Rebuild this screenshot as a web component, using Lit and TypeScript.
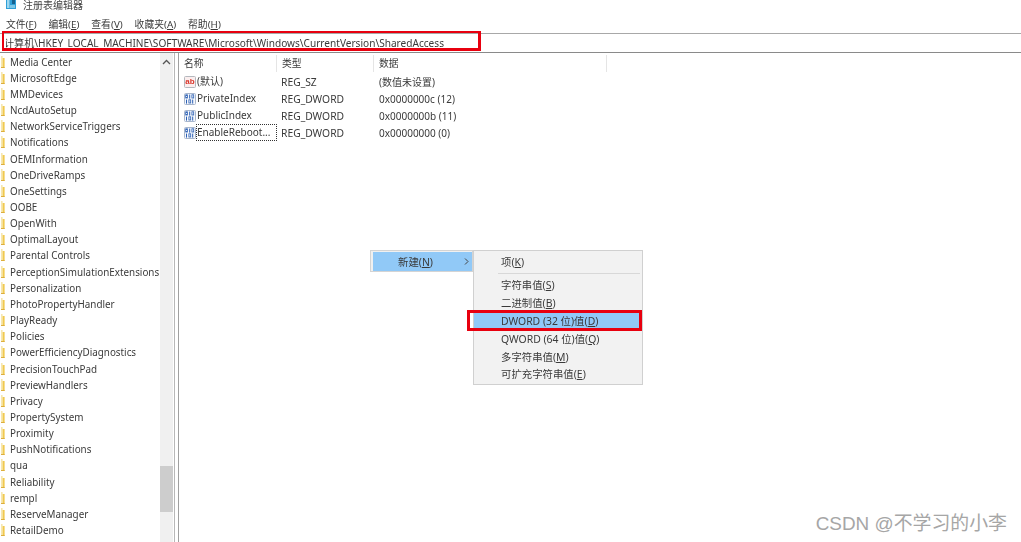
import { LitElement, html, css, svg } from "lit";
import { customElement } from "lit/decorators.js";

const TREE = ["Media Center","MicrosoftEdge","MMDevices","NcdAutoSetup","NetworkServiceTriggers","Notifications","OEMInformation","OneDriveRamps","OneSettings","OOBE","OpenWith","OptimalLayout","Parental Controls","PerceptionSimulationExtensions","Personalization","PhotoPropertyHandler","PlayReady","Policies","PowerEfficiencyDiagnostics","PrecisionTouchPad","PreviewHandlers","Privacy","PropertySystem","Proximity","PushNotifications","qua","Reliability","rempl","ReserveManager","RetailDemo"];

const VALUES = [
  { kind: "ab", name: "(默认)", type: "REG_SZ", data: "(数值未设置)" },
  { kind: "bin", name: "PrivateIndex", type: "REG_DWORD", data: "0x0000000c (12)" },
  { kind: "bin", name: "PublicIndex", type: "REG_DWORD", data: "0x0000000b (11)" },
  { kind: "bin", name: "EnableReboot...", type: "REG_DWORD", data: "0x00000000 (0)", focus: true },
];

const folder = html`<svg class="folder" viewBox="0 0 4 12" width="4" height="12">
  <rect x="0" y="0" width="1.6" height="12" fill="#f6e7ae"/>
  <rect x="1.6" y="2" width="2" height="10" fill="#f0c94f"/>
  <rect x="0" y="11" width="3.6" height="1" fill="#dcae3e"/>
</svg>`;

const abIcon = html`<svg class="ico" viewBox="0 0 12 12" width="12" height="12">
  <rect x="0.5" y="0.5" width="11" height="11" rx="1" fill="#fbeeee" stroke="#b4b8be"/>
  <text x="6" y="8.4" text-anchor="middle" font-size="8" font-weight="700" fill="#d8352a" font-family="Liberation Sans">ab</text>
</svg>`;

const digit = (x: number, y: number, one: boolean) =>
  one
    ? svg`<path d="M${x + 1} ${y} V${y + 4}" stroke="#2a5fb4" stroke-width="1" fill="none"/>`
    : svg`<rect x=${x + 0.2} y=${y + 0.2} width="1.8" height="3.2" fill="none" stroke="#2a5fb4" stroke-width="0.8"/>`;

const binIcon = html`<svg class="ico" viewBox="0 0 12 12" width="12" height="12">
  <rect x="0.5" y="0.5" width="11" height="11" rx="1" fill="#f6f8fc" stroke="#a8b6cc"/>
  ${digit(1.5, 1.6, false)}${digit(4.7, 1.6, true)}${digit(7.7, 1.6, false)}
  ${digit(1.5, 6.6, true)}${digit(4.7, 6.6, false)}${digit(7.7, 6.6, true)}
</svg>`;

@customElement("app-root")
export class AppRoot extends LitElement {
  static styles = css`
    :host {
      display: block; position: relative; width: 1021px; height: 542px; overflow: hidden; background: #fff;
      font-family: "Noto Sans", "Noto Sans CJK SC", sans-serif; font-size: 10px; color: #3a3a3a;
    }
    .window { display: flex; flex-direction: column; height: 542px; filter: blur(0.3px); }
    .title { height: 17px; display: flex; align-items: flex-start; gap: 7px; padding-left: 6px; flex: none; }
    .title span { font-size: 10px; line-height: 10px; color: #444; }
    .menu { height: 14px; margin-bottom: 2px; display: flex; gap: 11.9px; padding-left: 6px; align-items: center; flex: none; font-size: 9.8px; }
    .addr { height: 18px; flex: none; border-top: 1px solid #a8a8a8; border-bottom: 1px solid #8a8a8a; overflow: hidden; display: flex; align-items: flex-start; padding-left: 4px; }
    .addr span { white-space: nowrap; font-size: 10.1px; line-height: 18px; clip-path: inset(0 0 0 2px); }
    .main { flex: 1; display: flex; min-height: 0; }
    .tree { width: 160px; flex: none; padding-top: 0.5px; display: grid; grid-auto-rows: 16.17px; overflow: hidden; font-size: 9.85px; }
    .node { display: flex; align-items: center; gap: 5px; padding-left: 1px; white-space: nowrap; }
    .folder { flex: none; }
    .scroll { width: 13px; flex: none; background: #f0f0f0; display: flex; flex-direction: column; align-items: stretch; }
    .up { height: 18px; display: flex; align-items: center; justify-content: center; }
    .gap { height: 395px; }
    .thumb { height: 46px; background: #cdcdcd; }
    .split { width: 5px; flex: none; border-left: 1px solid #b8b8b8; border-right: 1px solid #a0a0a0; margin-left: 1px; box-sizing: border-box; }
    .list { flex: 1; min-width: 0; }
    .head { display: grid; grid-template-columns: 98px 97px 233px; height: 19px; padding-top: 2px; box-sizing: border-box; }
    .head div { padding-left: 5px; border-right: 1px solid #e5e5e5; line-height: 17px; font-size: 9.8px; }
    .rows { display: grid; grid-auto-rows: 17px; padding-top: 1px; }
    .row { display: grid; grid-template-columns: 98px 97px 233px; align-items: center; }
    .name { display: flex; align-items: center; padding-left: 5px; }
    .ico { flex: none; }
    .label { white-space: nowrap; padding: 0; line-height: 15px; border: 1px solid transparent; flex: 1; }
    .label.focus { border: 1px dotted #333; }
    .cell { padding-left: 4px; white-space: nowrap; font-size: 10.3px; }
    .cell2 { padding-left: 5px; white-space: nowrap; }

    .submenu { position: absolute; left: 370px; top: 250px; width: 103px; height: 22px; box-sizing: border-box; background: #f0f0f0; border: 1px solid #d4d4d4; padding: 1px 0 0 2px; font-size: 10.4px; filter: blur(0.3px); }
    .submenu .hot { height: 19px; background: #91c9f7; display: flex; align-items: center; justify-content: space-between; padding: 0 3px 0 25px; }
    .popup { position: absolute; left: 473px; top: 250px; width: 170px; height: 135px; box-sizing: border-box; background: #f2f2f2; border: 1px solid #d0d0d0; padding-top: 1px; font-size: 10.4px; filter: blur(0.3px); display: flex; flex-direction: column; }
    .item { height: 17.8px; flex: none; display: flex; align-items: center; padding-left: 27px; margin-right: 2px; white-space: nowrap; }
    .item.hot { background: #91c9f7; }
    .item.first { height: 18px; }
    .sep { height: 1px; background: #d8d8d8; margin: 2.5px 2px 2.5px 24px; flex: none; }
    .mark { position: absolute; border: 3px solid #e8000f; box-sizing: border-box; }
    .mark.a { left: 2px; top: 31px; width: 479px; height: 20px; border-width: 2px 3px 3px 2px; }
    .mark.b { left: 467px; top: 310px; width: 175px; height: 21px; }
    .wm { position: absolute; right: 14px; top: 512px; font-size: 18.9px; line-height: 24px; color: #a6a6a6; white-space: nowrap; font-family: "Liberation Sans", "Noto Sans CJK SC", sans-serif; }
  `;

  render() {
    return html`
      <div class="window">
        <div class="title">
          <svg viewBox="0 0 10 9" width="10" height="9" style="flex:none">
            <rect width="10" height="9" fill="#2f9fd8"/>
            <rect x="1" y="0" width="2.5" height="8" fill="#9fd8ef"/>
            <rect x="6" y="0" width="3" height="4" fill="#17628f"/>
            <rect x="4" y="5" width="5" height="3" fill="#7ec7e6"/>
          </svg>
          <span>注册表编辑器</span>
        </div>
        <div class="menu">
          <span>文件(<u>F</u>)</span><span>编辑(<u>E</u>)</span><span>查看(<u>V</u>)</span><span>收藏夹(<u>A</u>)</span><span>帮助(<u>H</u>)</span>
        </div>
        <div class="addr"><span>计算机\\HKEY_LOCAL_MACHINE\\SOFTWARE\\Microsoft\\Windows\\CurrentVersion\\SharedAccess</span></div>
        <div class="main">
          <div class="tree">${TREE.map((t) => html`<div class="node">${folder}<span>${t}</span></div>`)}</div>
          <div class="scroll">
            <div class="up"><svg viewBox="0 0 9 6" width="9" height="6"><path d="M1 5 L4.5 1.5 L8 5" fill="none" stroke="#555" stroke-width="1.3"/></svg></div>
            <div class="gap"></div>
            <div class="thumb"></div>
          </div>
          <div class="split"></div>
          <div class="list">
            <div class="head"><div>名称</div><div>类型</div><div>数据</div></div>
            <div class="rows">
              ${VALUES.map((v) => html`<div class="row">
                <div class="name">${v.kind === "ab" ? abIcon : binIcon}<span class="label ${v.focus ? "focus" : ""}">${v.name}</span></div>
                <div class="cell">${v.type}</div>
                <div class="cell2">${v.data}</div>
              </div>`)}
            </div>
          </div>
        </div>
      </div>
      <div class="submenu"><div class="hot"><span>新建(<u>N</u>)</span><svg viewBox="0 0 5 7" width="5" height="7"><path d="M1 0.5 L4 3.5 L1 6.5" fill="none" stroke="#444"/></svg></div></div>
      <div class="popup">
        <div class="item first"><span>项(<u>K</u>)</span></div>
        <div class="sep"></div>
        <div class="item"><span>字符串值(<u>S</u>)</span></div>
        <div class="item"><span>二进制值(<u>B</u>)</span></div>
        <div class="item hot"><span>DWORD (32 位)值(<u>D</u>)</span></div>
        <div class="item"><span>QWORD (64 位)值(<u>Q</u>)</span></div>
        <div class="item"><span>多字符串值(<u>M</u>)</span></div>
        <div class="item"><span>可扩充字符串值(<u>E</u>)</span></div>
      </div>
      <div class="mark a"></div>
      <div class="mark b"></div>
      <div class="wm">CSDN @不学习的小李</div>
    `;
  }
}
